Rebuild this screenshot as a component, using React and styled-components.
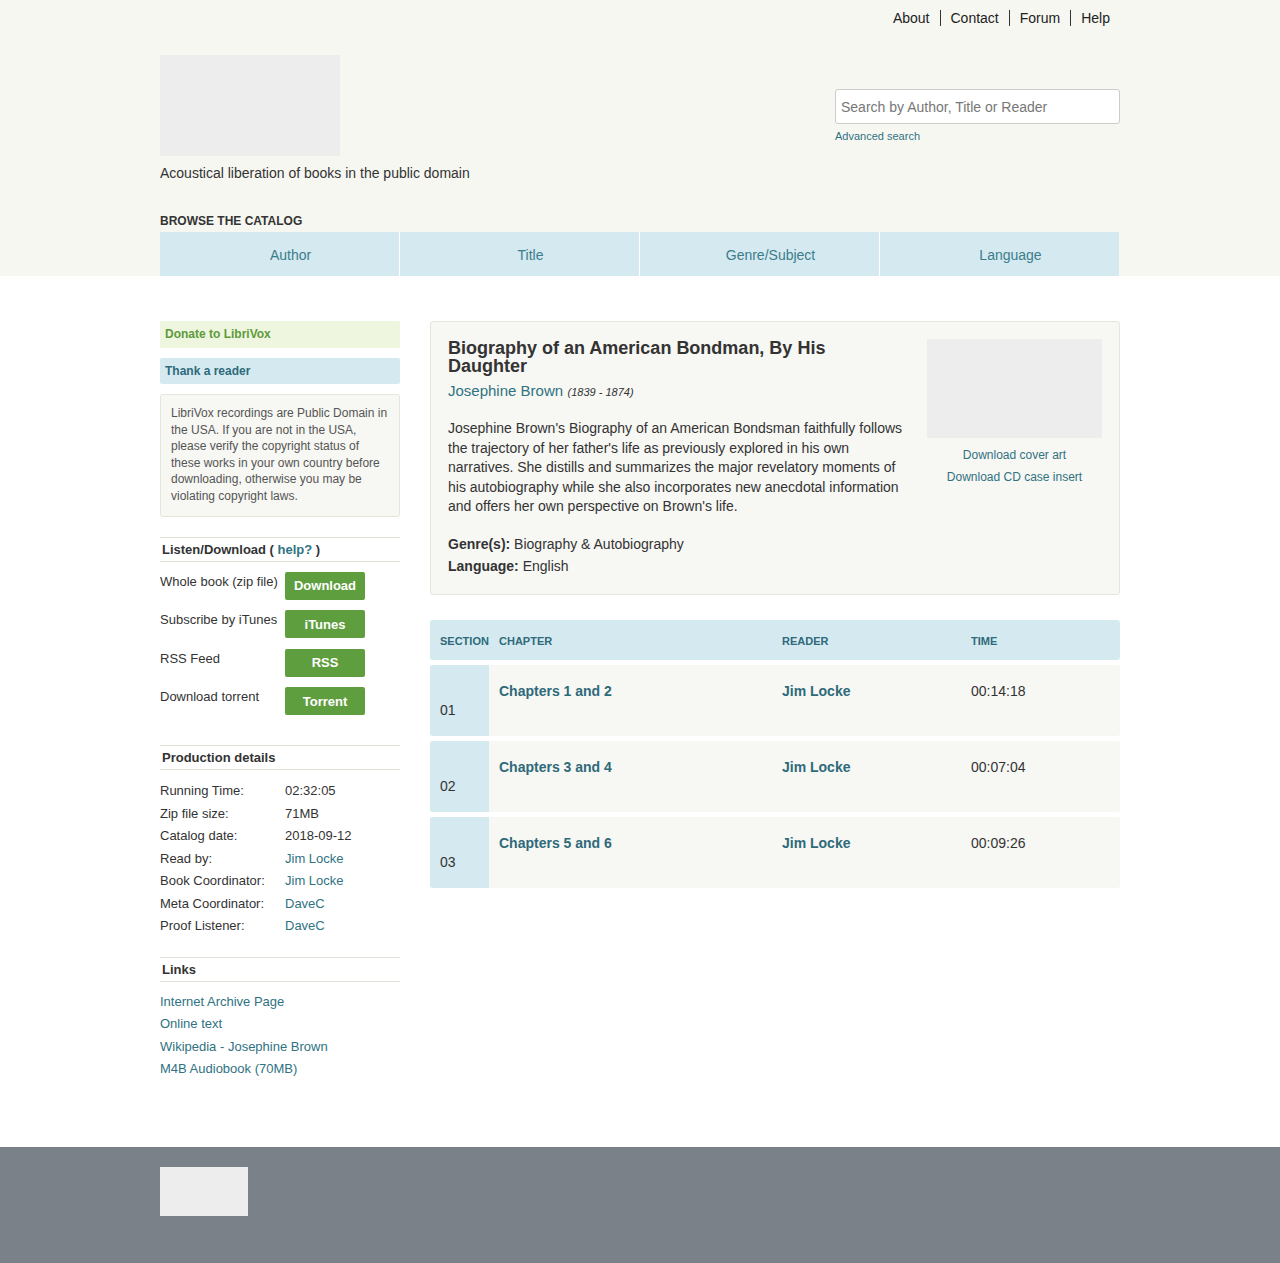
import React from "react";
import styled, { createGlobalStyle } from "styled-components";

const Global = createGlobalStyle`
  html, body { margin: 0; padding: 0; background: #fff; }
  body { font-family: "Liberation Sans", Arial, sans-serif; color: #333; }
  * { box-sizing: border-box; }
  a { color: #2f7282; text-decoration: none; }
`;

const teal = "#2f7282";
const paleBlue = "#d5e9f0";
const panel = "#f7f7f3";

const HeaderBand = styled.header`
  background: #f7f7f2;
`;
const Container = styled.div`
  width: 960px;
  margin: 0 auto;
`;
const TopNav = styled.nav`
  display: flex;
  justify-content: flex-end;
  padding: 10px 0 0;
`;
const TopLink = styled.a`
  color: #222;
  font-size: 14px;
  line-height: 16px;
  padding: 0 10px;
  border-left: ${(p) => (p.$first ? "none" : "1px solid #333")};
`;
const HeaderMain = styled.div`
  display: flex;
  justify-content: space-between;
  margin-top: 29px;
`;
const LogoBox = styled.div`
  width: 180px;
  height: 101px;
  background: #ededed;
`;
const Tagline = styled.p`
  margin: 7px 0 0;
  font-size: 14px;
  line-height: 20px;
  color: #333;
`;
const SearchCol = styled.div`
  width: 285px;
  padding-top: 34px;
`;
const SearchInput = styled.input`
  width: 285px;
  height: 35px;
  border: 1px solid #ccc;
  border-radius: 3px;
  background: #fff;
  padding: 0 5px;
  font-family: "Liberation Sans", Arial, sans-serif;
  font-size: 14px;
  color: #333;
  &::placeholder { color: #777; }
`;
const AdvLink = styled.a`
  display: block;
  margin-top: 5px;
  font-size: 11px;
  line-height: 14px;
`;
const BrowseLabel = styled.h3`
  margin: 31px 0 4px;
  font-size: 12px;
  line-height: 14px;
  font-weight: bold;
  text-transform: uppercase;
  color: #333;
`;
const Tabs = styled.div`
  display: grid;
  grid-template-columns: repeat(4, 1fr);
  height: 44px;
`;
const Tab = styled.a`
  display: flex;
  align-items: center;
  justify-content: center;
  padding: 2px 0 0 22px;
  background: ${paleBlue};
  border-right: 1px solid #fff;
  color: #3b7d8c;
  font-size: 14px;
  &:last-child { border-right: none; margin-right: 1px; }
`;

const Body = styled(Container)`
  display: flex;
  gap: 30px;
  padding: 45px 0 66px;
`;
const Sidebar = styled.aside`
  width: 240px;
  flex: none;
`;
const SideBanner = styled.a`
  display: block;
  height: ${(p) => p.$h}px;
  line-height: ${(p) => p.$h}px;
  padding: 0 5px;
  margin-bottom: 10px;
  font-size: 12px;
  font-weight: bold;
  border-radius: 2px;
  background: ${(p) => (p.$green ? "#eef6df" : paleBlue)};
  color: ${(p) => (p.$green ? "#5f9a3c" : "#2e6a7a")};
`;
const Notice = styled.div`
  background: ${panel};
  border: 1px solid #e5e5dc;
  border-radius: 3px;
  padding: 10px 10px 11px;
  font-size: 12px;
  line-height: 16.6px;
  color: #555;
`;
const SideHeading = styled.h4`
  margin: ${(p) => p.$mt}px 0 0;
  padding: 3px 2px;
  font-size: 13px;
  line-height: 17px;
  font-weight: bold;
  color: #333;
  border-top: 1px solid #e2e2d8;
  border-bottom: 1px solid #e2e2d8;
  a { color: ${teal}; }
`;
const DlList = styled.div`
  display: flex;
  flex-direction: column;
  gap: 10.5px;
  margin-top: 10px;
`;
const DlRow = styled.div`
  display: grid;
  grid-template-columns: 125px 80px;
  align-items: start;
`;
const DlLabel = styled.span`
  font-size: 13px;
  line-height: 20px;
  color: #333;
`;
const GreenBtn = styled.a`
  display: flex;
  align-items: center;
  justify-content: center;
  height: 28px;
  background: #5f9e3f;
  color: #fff;
  border-radius: 2px;
  font-size: 13px;
  font-weight: bold;
`;
const DetailList = styled.dl`
  display: grid;
  grid-template-columns: 125px 1fr;
  margin: 10px 0 0;
  font-size: 13px;
  line-height: 22.5px;
  dt, dd { margin: 0; }
`;
const LinkList = styled.div`
  display: flex;
  flex-direction: column;
  margin-top: 9px;
  font-size: 13px;
  line-height: 22.5px;
`;

const Main = styled.main`
  flex: 1;
  min-width: 0;
`;
const BookPanel = styled.section`
  display: grid;
  grid-template-columns: 1fr 175px;
  gap: 20px;
  background: ${panel};
  border: 1px solid #e6e6da;
  border-radius: 3px;
  padding: 17px;
`;
const Title = styled.h1`
  margin: 0;
  max-width: 445px;
  font-size: 18px;
  line-height: 18px;
  font-weight: bold;
  color: #333;
`;
const AuthorLine = styled.div`
  margin-top: 6px;
  line-height: 20px;
  a { font-size: 15px; }
  em { font-size: 11px; color: #333; margin-left: 0; }
`;
const Desc = styled.p`
  margin: 17px 0 0;
  font-size: 14px;
  line-height: 19.6px;
  color: #333;
`;
const Meta = styled.div`
  margin-top: 16px;
  font-size: 14px;
  line-height: 22px;
  color: #333;
  b { font-weight: bold; }
`;
const CoverCol = styled.div`
  display: flex;
  flex-direction: column;
  align-items: center;
`;
const Cover = styled.div`
  width: 175px;
  height: 99px;
  background: #ededed;
  margin-bottom: 6px;
`;
const CoverLink = styled.a`
  font-size: 12px;
  line-height: 22px;
`;

const Table = styled.div`
  margin-top: 25px;
  display: flex;
  flex-direction: column;
  gap: 5px;
`;
const cols = "59px 283px 189px 1fr";
const HeadRow = styled.div`
  display: grid;
  grid-template-columns: ${cols};
  height: 40px;
  padding-top: 2px;
  align-items: center;
  background: ${paleBlue};
  border-radius: 3px;
`;
const HeadCell = styled.div`
  padding: 0 10px;
  font-size: 11px;
  font-weight: bold;
  color: #2e6a7a;
  text-transform: uppercase;
`;
const Row = styled.div`
  display: grid;
  grid-template-columns: ${cols};
  height: 71px;
  background: ${panel};
  border-radius: 3px;
  overflow: hidden;
`;
const SecCell = styled.div`
  display: flex;
  align-items: flex-end;
  padding: 0 10px 17px;
  background: ${paleBlue};
  font-size: 14px;
  line-height: 17px;
  color: #333;
`;
const Cell = styled.div`
  padding: 18px 10px 0;
  font-size: 14px;
  line-height: 17px;
  color: #333;
  a { font-weight: bold; color: #2e6a7a; }
`;

const Footer = styled.footer`
  background: #7b8189;
  height: 116px;
  padding-top: 20px;
`;
const FootLogo = styled.div`
  width: 88px;
  height: 49px;
  background: #ededed;
`;

const sections = [
  ["01", "Chapters 1 and 2", "00:14:18"],
  ["02", "Chapters 3 and 4", "00:07:04"],
  ["03", "Chapters 5 and 6", "00:09:26"],
];

export default function App() {
  return (
    <>
      <Global />
      <HeaderBand>
        <Container>
          <TopNav>
            <TopLink $first href="#">About</TopLink>
            <TopLink href="#">Contact</TopLink>
            <TopLink href="#">Forum</TopLink>
            <TopLink href="#">Help</TopLink>
          </TopNav>
          <HeaderMain>
            <div>
              <LogoBox />
              <Tagline>Acoustical liberation of books in the public domain</Tagline>
            </div>
            <SearchCol>
              <SearchInput placeholder="Search by Author, Title or Reader" />
              <AdvLink href="#">Advanced search</AdvLink>
            </SearchCol>
          </HeaderMain>
          <BrowseLabel>Browse the catalog</BrowseLabel>
          <Tabs>
            <Tab href="#">Author</Tab>
            <Tab href="#">Title</Tab>
            <Tab href="#">Genre/Subject</Tab>
            <Tab href="#">Language</Tab>
          </Tabs>
        </Container>
      </HeaderBand>

      <Body>
        <Sidebar>
          <SideBanner $green $h={27} href="#">Donate to LibriVox</SideBanner>
          <SideBanner $h={26} href="#">Thank a reader</SideBanner>
          <Notice>
            LibriVox recordings are Public Domain in the USA. If you are not in the USA,
            please verify the copyright status of these works in your own country before
            downloading, otherwise you may be violating copyright laws.
          </Notice>

          <SideHeading $mt={20}>
            Listen/Download ( <a href="#">help?</a> )
          </SideHeading>
          <DlList>
            <DlRow><DlLabel>Whole book (zip file)</DlLabel><GreenBtn href="#">Download</GreenBtn></DlRow>
            <DlRow><DlLabel>Subscribe by iTunes</DlLabel><GreenBtn href="#">iTunes</GreenBtn></DlRow>
            <DlRow><DlLabel>RSS Feed</DlLabel><GreenBtn href="#">RSS</GreenBtn></DlRow>
            <DlRow><DlLabel>Download torrent</DlLabel><GreenBtn href="#">Torrent</GreenBtn></DlRow>
          </DlList>

          <SideHeading $mt={30}>Production details</SideHeading>
          <DetailList>
            <dt>Running Time:</dt><dd>02:32:05</dd>
            <dt>Zip file size:</dt><dd>71MB</dd>
            <dt>Catalog date:</dt><dd>2018-09-12</dd>
            <dt>Read by:</dt><dd><a href="#">Jim Locke</a></dd>
            <dt>Book Coordinator:</dt><dd><a href="#">Jim Locke</a></dd>
            <dt>Meta Coordinator:</dt><dd><a href="#">DaveC</a></dd>
            <dt>Proof Listener:</dt><dd><a href="#">DaveC</a></dd>
          </DetailList>

          <SideHeading $mt={19}>Links</SideHeading>
          <LinkList>
            <a href="#">Internet Archive Page</a>
            <a href="#">Online text</a>
            <a href="#">Wikipedia - Josephine Brown</a>
            <a href="#">M4B Audiobook (70MB)</a>
          </LinkList>
        </Sidebar>

        <Main>
          <BookPanel>
            <div>
              <Title>Biography of an American Bondman, By His Daughter</Title>
              <AuthorLine>
                <a href="#">Josephine Brown</a> <em>(1839 - 1874)</em>
              </AuthorLine>
              <Desc>
                Josephine Brown's Biography of an American Bondsman faithfully follows the
                trajectory of her father's life as previously explored in his own narratives.
                She distills and summarizes the major revelatory moments of his autobiography
                while she also incorporates new anecdotal information and offers her own
                perspective on Brown's life.
              </Desc>
              <Meta>
                <div><b>Genre(s):</b> Biography &amp; Autobiography</div>
                <div><b>Language:</b> English</div>
              </Meta>
            </div>
            <CoverCol>
              <Cover />
              <CoverLink href="#">Download cover art</CoverLink>
              <CoverLink href="#">Download CD case insert</CoverLink>
            </CoverCol>
          </BookPanel>

          <Table>
            <HeadRow>
              <HeadCell>Section</HeadCell>
              <HeadCell>Chapter</HeadCell>
              <HeadCell>Reader</HeadCell>
              <HeadCell>Time</HeadCell>
            </HeadRow>
            {sections.map(([n, ch, t]) => (
              <Row key={n}>
                <SecCell>{n}</SecCell>
                <Cell><a href="#">{ch}</a></Cell>
                <Cell><a href="#">Jim Locke</a></Cell>
                <Cell>{t}</Cell>
              </Row>
            ))}
          </Table>
        </Main>
      </Body>

      <Footer>
        <Container>
          <FootLogo />
        </Container>
      </Footer>
    </>
  );
}
